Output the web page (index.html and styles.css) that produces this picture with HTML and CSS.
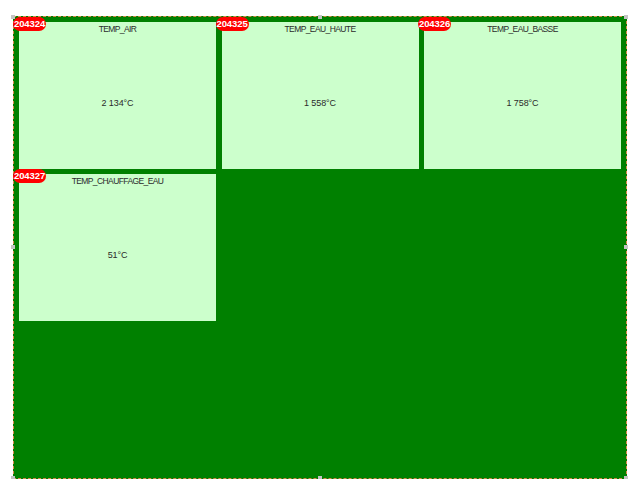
FILE: index.html
```html
<!DOCTYPE html>
<html>
<head>
<meta charset="utf-8">
<link rel="stylesheet" href="styles.css">
</head>
<body>
<div class="canvas">
  <div class="frame">
    <div class="card">
      <span class="badge">204324</span>
      <div class="title">TEMP_AIR</div>
      <div class="value">2 134°C</div>
    </div>
    <div class="card">
      <span class="badge">204325</span>
      <div class="title">TEMP_EAU_HAUTE</div>
      <div class="value">1 558°C</div>
    </div>
    <div class="card">
      <span class="badge">204326</span>
      <div class="title">TEMP_EAU_BASSE</div>
      <div class="value">1 758°C</div>
    </div>
    <div class="card">
      <span class="badge">204327</span>
      <div class="title">TEMP_CHAUFFAGE_EAU</div>
      <div class="value">51°C</div>
    </div>
  </div>
  <span class="handle h-tl"></span>
  <span class="handle h-tc"></span>
  <span class="handle h-tr"></span>
  <span class="handle h-ml"></span>
  <span class="handle h-mr"></span>
  <span class="handle h-bl"></span>
  <span class="handle h-bc"></span>
  <span class="handle h-br"></span>
</div>
</body>
</html>
```

FILE: styles.css
```css
html, body {
  margin: 0;
  padding: 0;
  background: #ffffff;
}

.canvas {
  position: relative;
  margin: 16px 0 0 13px;
  width: 614px;
  height: 463px;
}

.frame {
  box-sizing: border-box;
  width: 100%;
  height: 100%;
  border: 1px dashed #d7894a;
  background: #008000;
  padding: 5px;
  display: grid;
  grid-template-columns: repeat(3, 197px);
  grid-auto-rows: 147px;
  justify-content: space-between;
  align-content: start;
  row-gap: 5px;
}

.card {
  position: relative;
  background: #ccffcc;
  display: flex;
  flex-direction: column;
  font-family: "Liberation Sans", Arial, sans-serif;
  font-size: 9px;
  color: #2a2a2a;
}

.title {
  padding-top: 1px;
  line-height: 12px;
  height: 12px;
  font-size: 8.5px;
  text-align: center;
  letter-spacing: -0.6px;
}

.value {
  flex: 1;
  display: flex;
  align-items: center;
  justify-content: center;
  padding-top: 2px;
  letter-spacing: -0.1px;
}

.badge {
  position: absolute;
  left: -6px;
  top: -5px;
  height: 14px;
  line-height: 14px;
  padding: 0 1px;
  background: #ff0000;
  color: #ffffff;
  font-family: "Liberation Sans", Arial, sans-serif;
  font-weight: bold;
  font-size: 9.5px;
  letter-spacing: -0.1px;
  border-radius: 7px;
}

.handle {
  position: absolute;
  width: 4px;
  height: 4px;
  background: #c4c4c4;
}

.h-tl { left: -2px; top: -1px; }
.h-tc { left: 305px; top: -1px; }
.h-tr { left: 611px; top: -1px; }
.h-ml { left: -2px; top: 229px; }
.h-mr { left: 611px; top: 229px; }
.h-bl { left: -2px; top: 460px; }
.h-bc { left: 305px; top: 460px; }
.h-br { left: 611px; top: 460px; }
```
